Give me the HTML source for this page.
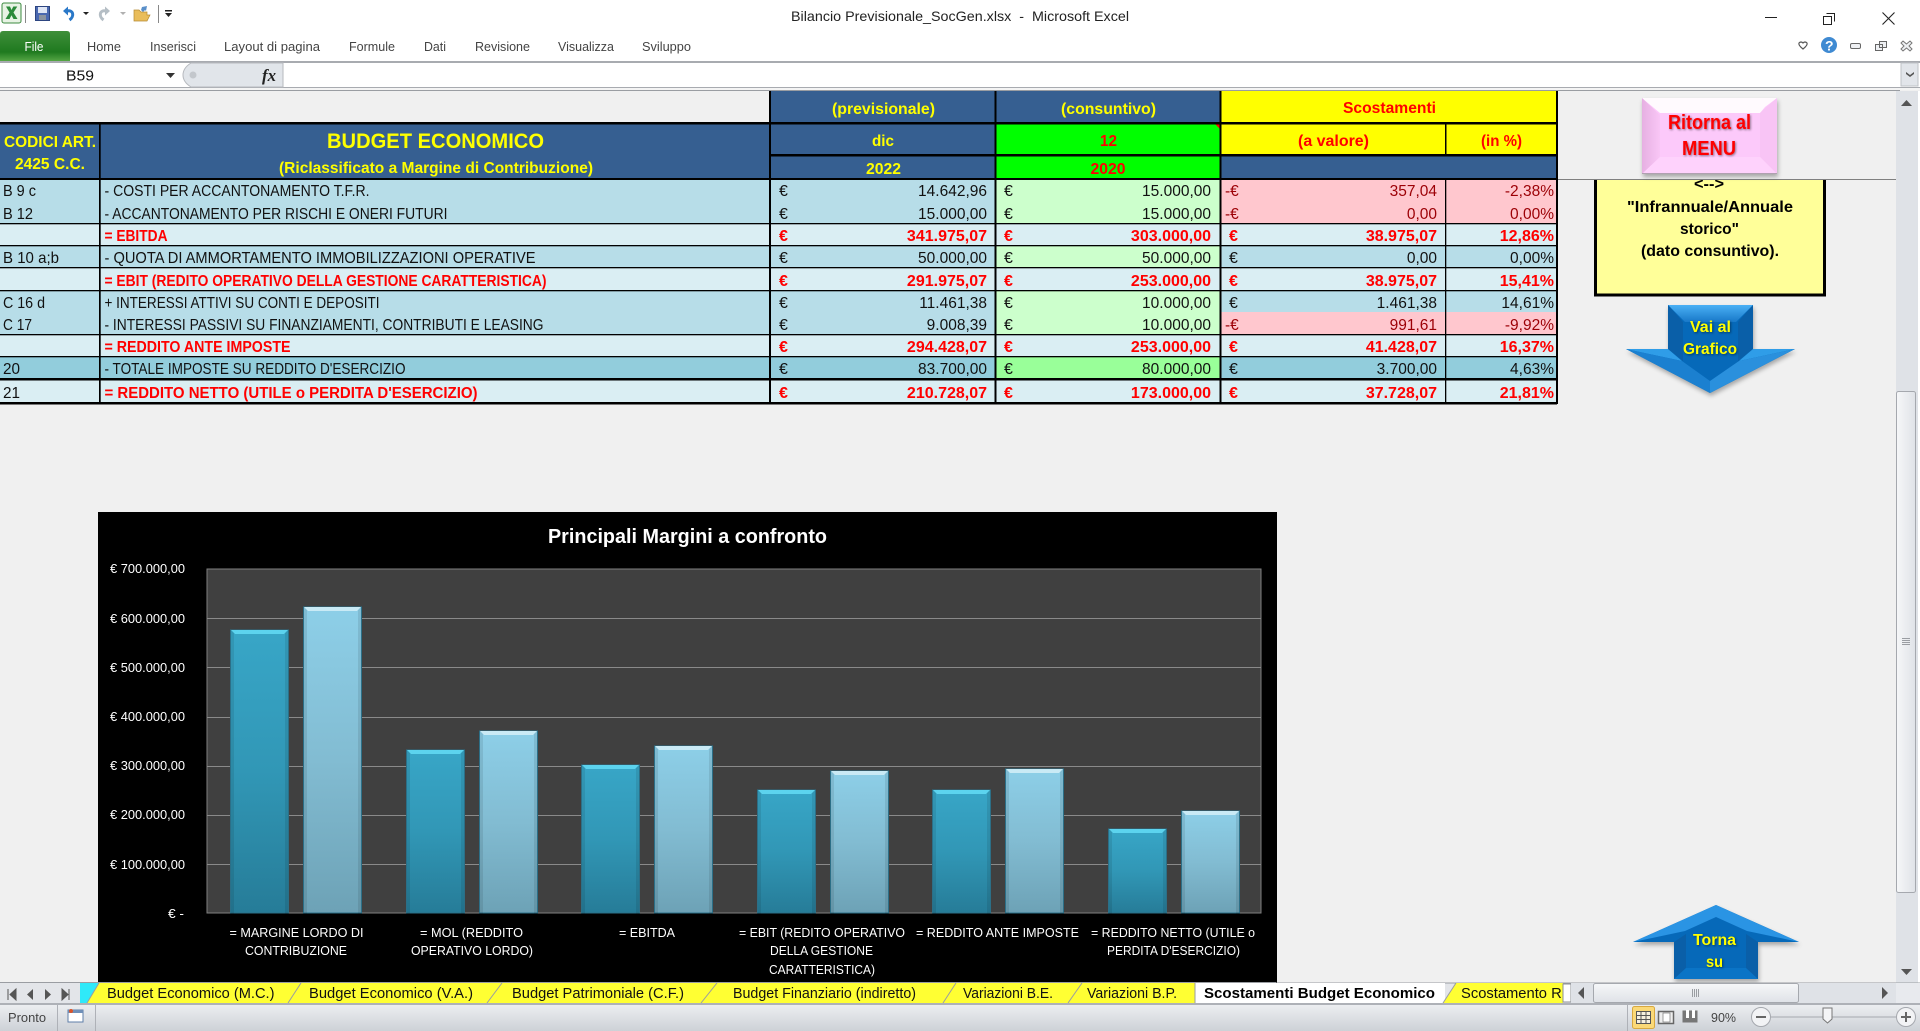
<!DOCTYPE html>
<html lang="it"><head><meta charset="utf-8"><title>Bilancio Previsionale_SocGen.xlsx - Microsoft Excel</title>
<style>
html,body{margin:0;padding:0;background:#f0f0f0;width:1920px;height:1031px;overflow:hidden}
svg{display:block;position:absolute;left:0;top:0}
text{font-family:"Liberation Sans",sans-serif;white-space:pre}
.ui{font-size:13px;fill:#444}
.d{font-size:16px;fill:#111}
.n{font-size:15.5px;fill:#111;text-anchor:end}
.b{font-size:16px;fill:#f00;font-weight:bold}
.bn{font-size:16px;fill:#f00;font-weight:bold;text-anchor:end}
.p{font-size:15.5px;fill:#9c0006}
.pn{font-size:15.5px;fill:#9c0006;text-anchor:end}
.y{font-size:16px;fill:#ff0;font-weight:bold}
.r{font-size:16px;fill:#f00;font-weight:bold}
.c{font-size:13px;fill:#fff}
.t{font-size:14.5px;fill:#111}
.k{font-size:16px;fill:#000;font-weight:bold}
.sh{filter:drop-shadow(1px 1px 1px rgba(0,0,0,.45))}
.sh2{filter:drop-shadow(1px 3px 2px rgba(0,0,0,.3))}
</style></head><body>
<svg width="1920" height="1031" viewBox="0 0 1920 1031" xmlns="http://www.w3.org/2000/svg">
<defs>
<linearGradient id="g1" x1="0" y1="0" x2="0" y2="1"><stop offset="0" stop-color="#38a6c7"/><stop offset=".5" stop-color="#3197b6"/><stop offset="1" stop-color="#267c98"/></linearGradient>
<linearGradient id="g2" x1="0" y1="0" x2="0" y2="1"><stop offset="0" stop-color="#8dcfe8"/><stop offset=".5" stop-color="#82bcd2"/><stop offset="1" stop-color="#6da2b6"/></linearGradient>
<linearGradient id="st" x1="0" y1="0" x2="0" y2="1"><stop offset="0" stop-color="#eceef1"/><stop offset="1" stop-color="#cdd1d7"/></linearGradient>
<linearGradient id="fl" x1="0" y1="0" x2="0" y2="1"><stop offset="0" stop-color="#3f8f3a"/><stop offset=".7" stop-color="#1f7a1f"/><stop offset="1" stop-color="#55a544"/></linearGradient>
<linearGradient id="vt" x1="0" y1="0" x2="1" y2="0"><stop offset="0" stop-color="#f6f7f9"/><stop offset="1" stop-color="#dfe2e7"/></linearGradient>
<linearGradient id="ht" x1="0" y1="0" x2="0" y2="1"><stop offset="0" stop-color="#f6f7f9"/><stop offset="1" stop-color="#dfe2e7"/></linearGradient>
<linearGradient id="ad" x1="0" y1="0" x2="0" y2="1"><stop offset="0" stop-color="#4ab0f5"/><stop offset="1" stop-color="#1878c8"/></linearGradient>
<linearGradient id="lb" x1="0" y1="0" x2="1" y2="0"><stop offset="0" stop-color="#e6b0e2"/><stop offset="1" stop-color="#f9c6f6"/></linearGradient>
<clipPath id="tc"><rect x="0" y="983" width="1563" height="20"/></clipPath>
<clipPath id="ch"><rect x="98" y="512" width="1179" height="471"/></clipPath>
</defs>

<!-- sheet background -->
<rect x="0" y="0" width="1920" height="1031" fill="#f0f0f0"/>

<!-- title bar + ribbon -->
<rect x="0" y="0" width="1920" height="61" fill="#fff"/>
<rect x="2" y="3" width="19" height="20" rx="2" fill="#e8f3e4" stroke="#3d8b40"/>
<path d="M6 6.500h4l1.500 3.500 1.800-3.500h4l-3.800 6 4 6.500h-4l-2-3.800-2 3.800h-4l4-6.500z" fill="#2c8a3a"/>
<rect x="25" y="5" width="1" height="18" fill="#888"/>
<rect x="35.500" y="6.500" width="14" height="14" fill="#4a68b0" stroke="#2d4580"/><rect x="38" y="7" width="9" height="6" fill="#dfe6f5"/><rect x="39" y="15" width="7" height="5" fill="#8a93a0"/>
<path d="M63 11l5-4.500v9z" fill="#2a78c8"/><path d="M67 11c6-1.500 8 5 2.500 9" fill="none" stroke="#2a78c8" stroke-width="3"/>
<path d="M83 12h6l-3 3z" fill="#222"/>
<path d="M110 11l-5-4.500v9z" fill="#b5bec5"/><path d="M106 11c-6-1.500-8 5-2.500 9" fill="none" stroke="#b5bec5" stroke-width="3"/>
<path d="M120 12h6l-3 3z" fill="#b0b0b0"/>
<path d="M134 10h5l2 2h6v3h3l-3 6h-13z" fill="#e9bd5b" stroke="#b58a33" stroke-width=".7"/><path d="M142 7l5-1-1 5-1-1-2 2-2-2z" fill="#5a8fc9"/>
<rect x="158" y="5" width="1" height="18" fill="#888"/>
<rect x="165" y="10" width="7" height="1.500" fill="#222"/><path d="M165 13h7l-3.500 4z" fill="#222"/>
<text x="791" y="21" font-size="14" fill="#222" textLength="338" lengthAdjust="spacingAndGlyphs">Bilancio Previsionale_SocGen.xlsx  -  Microsoft Excel</text>
<rect x="1765" y="17" width="12" height="1" fill="#222"/>
<path d="M1826.500 13.500h8v8M1823.500 16.500h8v8h-8z" fill="none" stroke="#222"/>
<path d="M1882.500 12.500l12 12M1894.500 12.500l-12 12" stroke="#222" fill="none" stroke-width="1.100"/>

<path d="M0 61V34q0-3 3-3h64q3 0 3 3v27z" fill="url(#fl)"/>
<text x="24.500" y="51" font-size="12.500" fill="#fff" textLength="19" lengthAdjust="spacingAndGlyphs">File</text>
<g class="ui">
<text x="87" y="51" textLength="34" lengthAdjust="spacingAndGlyphs">Home</text>
<text x="150" y="51" textLength="46" lengthAdjust="spacingAndGlyphs">Inserisci</text>
<text x="224" y="51" textLength="96" lengthAdjust="spacingAndGlyphs">Layout di pagina</text>
<text x="349" y="51" textLength="46" lengthAdjust="spacingAndGlyphs">Formule</text>
<text x="424" y="51" textLength="22" lengthAdjust="spacingAndGlyphs">Dati</text>
<text x="475" y="51" textLength="55" lengthAdjust="spacingAndGlyphs">Revisione</text>
<text x="558" y="51" textLength="56" lengthAdjust="spacingAndGlyphs">Visualizza</text>
<text x="642" y="51" textLength="49" lengthAdjust="spacingAndGlyphs">Sviluppo</text>
</g>
<path d="M1799 43q2-2 4 0q2-2 4 0q1 2-4 6q-5-4-4-6z" fill="none" stroke="#555" stroke-width="1.200"/>
<circle cx="1829" cy="45" r="8" fill="#3f8ad2"/><text x="1825" y="50.500" font-size="14" font-weight="bold" fill="#fff">?</text>
<rect x="1850.500" y="43.500" width="10" height="5" rx="1.500" fill="#eef0f3" stroke="#666"/>
<path d="M1879.500 41.500h7v6h-7zM1875.500 44.500h7v6h-7z" fill="#eef0f3" stroke="#666"/>
<path d="M1903 41l3.500 3 3.500-3 2 2-3 3 3 3-2 2-3.500-3-3.500 3-2-2 3-3-3-3z" fill="#eef0f3" stroke="#777"/>

<!-- formula bar -->
<rect x="0" y="61" width="1920" height="2" fill="#a8abb0"/>
<rect x="0" y="63" width="1920" height="24" fill="#fff"/>
<rect x="0" y="87" width="1920" height="1" fill="#a8abb0"/>
<rect x="0" y="88" width="1920" height="2" fill="#f4f4f4"/>
<rect x="0" y="90" width="1900" height="1" fill="#9a9da2"/>
<text x="66" y="80.500" font-size="14.500" fill="#111" textLength="28" lengthAdjust="spacingAndGlyphs">B59</text>
<path d="M166 73h9l-4.500 5z" fill="#333"/>
<path d="M283 63h-92q-8 5-8 12t8 12h92z" fill="#e1e5ea" stroke="#b6b9be"/>
<circle cx="193" cy="75" r="3.500" fill="#c3c7cc"/>
<text x="262" y="81" style="font-family:'Liberation Serif',serif" font-size="17" font-style="italic" font-weight="bold" fill="#222" textLength="14" lengthAdjust="spacingAndGlyphs">fx</text>
<rect x="1901" y="63" width="17" height="23" fill="#e2e5ea" stroke="#bfc2c7"/>
<path d="M1906 72l4 3 4-3v2l-4 3-4-3z" fill="#555"/>

<!-- header blocks -->
<rect x="0" y="124" width="769" height="54" fill="#365f91"/>
<rect x="770" y="91" width="450" height="31" fill="#365f91"/>
<rect x="1220" y="91" width="337" height="31" fill="#ff0"/>
<rect x="770" y="124" width="225" height="30" fill="#365f91"/>
<rect x="770" y="156" width="225" height="22" fill="#365f91"/>
<rect x="995" y="124" width="225" height="30" fill="#0f0"/>
<rect x="995" y="156" width="225" height="22" fill="#0f0"/>
<rect x="1220" y="124" width="337" height="30" fill="#ff0"/>
<rect x="1220" y="156" width="337" height="22" fill="#365f91"/>
<path d="M1215 124h5v5z" fill="#f00"/>

<!-- row fills -->
<rect x="0" y="180" width="995" height="43" fill="#b7dde8"/><rect x="995" y="180" width="225" height="43" fill="#ccffcc"/><rect x="1220" y="180" width="337" height="43" fill="#ffc7ce"/>
<rect x="0" y="223" width="1557" height="22" fill="#daeef3"/>
<rect x="0" y="245" width="1557" height="22" fill="#b7dde8"/><rect x="995" y="245" width="225" height="22" fill="#ccffcc"/>
<rect x="0" y="267" width="1557" height="23" fill="#daeef3"/>
<rect x="0" y="290" width="1557" height="44" fill="#b7dde8"/><rect x="995" y="290" width="225" height="44" fill="#ccffcc"/><rect x="1220" y="312" width="337" height="22" fill="#ffc7ce"/>
<rect x="0" y="334" width="1557" height="22" fill="#daeef3"/>
<rect x="0" y="356" width="1557" height="23" fill="#92cddc"/><rect x="995" y="356" width="225" height="23" fill="#99ff99"/>
<rect x="0" y="379" width="1557" height="24" fill="#daeef3"/>

<!-- grid lines -->
<g fill="#000">
<rect x="0" y="122" width="1557" height="2.500"/>
<rect x="769" y="154" width="788" height="2.500"/>
<rect x="0" y="178" width="1557" height="2"/>
<rect x="0" y="223" width="1557" height="1.300"/>
<rect x="0" y="245" width="1557" height="1.300"/>
<rect x="0" y="267" width="1557" height="1.300"/>
<rect x="0" y="290" width="1557" height="1.300"/>
<rect x="0" y="334" width="1557" height="1.300"/>
<rect x="0" y="356" width="1557" height="1.300"/>
<rect x="0" y="378" width="1557" height="2.500"/>
<rect x="0" y="402" width="1557" height="2.500"/>
<rect x="99" y="124" width="1.700" height="280"/>
<rect x="769" y="91" width="2" height="313"/>
<rect x="994.500" y="91" width="2" height="313"/>
<rect x="1219.500" y="91" width="2" height="313"/>
<rect x="1445" y="124" width="1.500" height="32"/>
<rect x="1445" y="180" width="1.300" height="224"/>
<rect x="1556" y="91" width="2" height="313"/>
</g>
<rect x="1558" y="179" width="338" height="1" fill="#808080"/>

<!-- header text -->
<text class="y" x="4" y="147" textLength="92" lengthAdjust="spacingAndGlyphs">CODICI ART.</text>
<text class="y" x="15" y="169" textLength="70" lengthAdjust="spacingAndGlyphs">2425 C.C.</text>
<text class="y" x="327" y="148" style="font-size:21px" textLength="217" lengthAdjust="spacingAndGlyphs">BUDGET ECONOMICO</text>
<text class="y" x="279" y="173" textLength="314" lengthAdjust="spacingAndGlyphs">(Riclassificato a Margine di Contribuzione)</text>
<text class="y" x="832" y="114" textLength="103" lengthAdjust="spacingAndGlyphs">(previsionale)</text>
<text class="y" x="1061" y="114" textLength="95" lengthAdjust="spacingAndGlyphs">(consuntivo)</text>
<text class="r" x="1343" y="113" textLength="93" lengthAdjust="spacingAndGlyphs">Scostamenti</text>
<text class="y" x="872" y="146" textLength="22" lengthAdjust="spacingAndGlyphs">dic</text>
<text class="r" x="1100" y="146" textLength="17" lengthAdjust="spacingAndGlyphs">12</text>
<text class="r" x="1298" y="146" textLength="71" lengthAdjust="spacingAndGlyphs">(a valore)</text>
<text class="r" x="1481" y="146" textLength="41" lengthAdjust="spacingAndGlyphs">(in %)</text>
<text class="y" x="866" y="174" textLength="35" lengthAdjust="spacingAndGlyphs">2022</text>
<text class="r" x="1090.500" y="174" textLength="35" lengthAdjust="spacingAndGlyphs">2020</text>

<!-- codes -->
<text class="d" x="3" y="196" textLength="33" lengthAdjust="spacingAndGlyphs">B 9 c</text>
<text class="d" x="3" y="219" textLength="30" lengthAdjust="spacingAndGlyphs">B 12</text>
<text class="d" x="3" y="263" textLength="56" lengthAdjust="spacingAndGlyphs">B 10 a;b</text>
<text class="d" x="3" y="308" textLength="42" lengthAdjust="spacingAndGlyphs">C 16 d</text>
<text class="d" x="3" y="330" textLength="29" lengthAdjust="spacingAndGlyphs">C 17</text>
<text class="d" x="3" y="374" textLength="17" lengthAdjust="spacingAndGlyphs">20</text>
<text class="d" x="3" y="398" textLength="17" lengthAdjust="spacingAndGlyphs">21</text>

<!-- labels -->
<text class="d" x="104.500" y="196" textLength="265" lengthAdjust="spacingAndGlyphs">- COSTI PER ACCANTONAMENTO T.F.R.</text>
<text class="d" x="104.500" y="219" textLength="343" lengthAdjust="spacingAndGlyphs">- ACCANTONAMENTO PER RISCHI E ONERI FUTURI</text>
<text class="b" x="104.500" y="241" textLength="63" lengthAdjust="spacingAndGlyphs">= EBITDA</text>
<text class="d" x="104.500" y="263" textLength="431" lengthAdjust="spacingAndGlyphs">- QUOTA DI AMMORTAMENTO IMMOBILIZZAZIONI OPERATIVE</text>
<text class="b" x="104.500" y="286" textLength="442" lengthAdjust="spacingAndGlyphs">= EBIT (REDITO OPERATIVO DELLA GESTIONE CARATTERISTICA)</text>
<text class="d" x="104.500" y="308" textLength="275" lengthAdjust="spacingAndGlyphs">+ INTERESSI ATTIVI SU CONTI E DEPOSITI</text>
<text class="d" x="104.500" y="330" textLength="439" lengthAdjust="spacingAndGlyphs">- INTERESSI PASSIVI SU FINANZIAMENTI, CONTRIBUTI E LEASING</text>
<text class="b" x="104.500" y="352" textLength="186" lengthAdjust="spacingAndGlyphs">= REDDITO ANTE IMPOSTE</text>
<text class="d" x="104.500" y="374" textLength="301" lengthAdjust="spacingAndGlyphs">- TOTALE IMPOSTE SU REDDITO D'ESERCIZIO</text>
<text class="b" x="104.500" y="398" textLength="373" lengthAdjust="spacingAndGlyphs">= REDDITO NETTO (UTILE o PERDITA D'ESERCIZIO)</text>

<!-- euro signs and values -->
<g>
<text class="d" x="779" y="196">€</text><text class="n" x="987" y="196">14.642,96</text><text class="d" x="1004" y="196">€</text><text class="n" x="1211" y="196">15.000,00</text><text class="p" x="1225" y="196">-€</text><text class="pn" x="1437" y="196">357,04</text><text class="pn" x="1554" y="196">-2,38%</text>
<text class="d" x="779" y="219">€</text><text class="n" x="987" y="219">15.000,00</text><text class="d" x="1004" y="219">€</text><text class="n" x="1211" y="219">15.000,00</text><text class="p" x="1225" y="219">-€</text><text class="pn" x="1437" y="219">0,00</text><text class="pn" x="1554" y="219">0,00%</text>
<text class="b" x="779" y="241">€</text><text class="bn" x="987" y="241">341.975,07</text><text class="b" x="1004" y="241">€</text><text class="bn" x="1211" y="241">303.000,00</text><text class="b" x="1229" y="241">€</text><text class="bn" x="1437" y="241">38.975,07</text><text class="bn" x="1554" y="241">12,86%</text>
<text class="d" x="779" y="263">€</text><text class="n" x="987" y="263">50.000,00</text><text class="d" x="1004" y="263">€</text><text class="n" x="1211" y="263">50.000,00</text><text class="d" x="1229" y="263">€</text><text class="n" x="1437" y="263">0,00</text><text class="n" x="1554" y="263">0,00%</text>
<text class="b" x="779" y="286">€</text><text class="bn" x="987" y="286">291.975,07</text><text class="b" x="1004" y="286">€</text><text class="bn" x="1211" y="286">253.000,00</text><text class="b" x="1229" y="286">€</text><text class="bn" x="1437" y="286">38.975,07</text><text class="bn" x="1554" y="286">15,41%</text>
<text class="d" x="779" y="308">€</text><text class="n" x="987" y="308">11.461,38</text><text class="d" x="1004" y="308">€</text><text class="n" x="1211" y="308">10.000,00</text><text class="d" x="1229" y="308">€</text><text class="n" x="1437" y="308">1.461,38</text><text class="n" x="1554" y="308">14,61%</text>
<text class="d" x="779" y="330">€</text><text class="n" x="987" y="330">9.008,39</text><text class="d" x="1004" y="330">€</text><text class="n" x="1211" y="330">10.000,00</text><text class="p" x="1225" y="330">-€</text><text class="pn" x="1437" y="330">991,61</text><text class="pn" x="1554" y="330">-9,92%</text>
<text class="b" x="779" y="352">€</text><text class="bn" x="987" y="352">294.428,07</text><text class="b" x="1004" y="352">€</text><text class="bn" x="1211" y="352">253.000,00</text><text class="b" x="1229" y="352">€</text><text class="bn" x="1437" y="352">41.428,07</text><text class="bn" x="1554" y="352">16,37%</text>
<text class="d" x="779" y="374">€</text><text class="n" x="987" y="374">83.700,00</text><text class="d" x="1004" y="374">€</text><text class="n" x="1211" y="374">80.000,00</text><text class="d" x="1229" y="374">€</text><text class="n" x="1437" y="374">3.700,00</text><text class="n" x="1554" y="374">4,63%</text>
<text class="b" x="779" y="398">€</text><text class="bn" x="987" y="398">210.728,07</text><text class="b" x="1004" y="398">€</text><text class="bn" x="1211" y="398">173.000,00</text><text class="b" x="1229" y="398">€</text><text class="bn" x="1437" y="398">37.728,07</text><text class="bn" x="1554" y="398">21,81%</text>
</g>

<!-- yellow note -->
<rect x="1595.500" y="170" width="229" height="125" fill="#ffff99" stroke="#000" stroke-width="3"/>
<text class="k" x="1694" y="189" textLength="30" lengthAdjust="spacingAndGlyphs">&lt;--&gt;</text>
<text class="k" x="1627" y="212" textLength="166" lengthAdjust="spacingAndGlyphs">"Infrannuale/Annuale</text>
<text class="k" x="1680" y="234" textLength="59" lengthAdjust="spacingAndGlyphs">storico"</text>
<text class="k" x="1641" y="256" textLength="138" lengthAdjust="spacingAndGlyphs">(dato consuntivo).</text>
<rect x="1558" y="91" width="338" height="88" fill="#f0f0f0"/>
<rect x="1558" y="179" width="338" height="1" fill="#808080"/>

<!-- Ritorna button -->
<g class="sh2"><rect x="1642" y="98" width="135" height="76" fill="#fcc9fa"/></g>
<path d="M1642 98h135l-12 9-5 6h-100l-6-5z" fill="#fffafe"/>
<path d="M1642 98l18 17v42l-18 17z" fill="url(#lb)"/>
<path d="M1777 98l-17 15v44l17 17z" fill="#f8c4f5"/>
<path d="M1642 174l18-17h100l17 17z" fill="#fed2fc"/>
<rect x="1642" y="173" width="135" height="1" fill="#b0a0b0"/>
<text class="sh" x="1668" y="129" font-size="20" font-weight="bold" fill="#f00" textLength="83" lengthAdjust="spacingAndGlyphs">Ritorna al</text>
<text class="sh" x="1682" y="155" font-size="20" font-weight="bold" fill="#f00" textLength="54" lengthAdjust="spacingAndGlyphs">MENU</text>

<!-- down arrow -->
<g class="sh2"><path d="M1668 305h85v44h42l-85 44-84-44h42z" fill="#0669b9"/></g>
<path d="M1668 305h85l-17 17h-51z" fill="url(#ad)"/>
<path d="M1668 305l15 17v39l-15-12z" fill="#0a5fa8"/>
<path d="M1753 305l-15 17v39l15-12z" fill="#0a5fa8"/>
<path d="M1626 349h42l14 12z" fill="#2f9de8"/><path d="M1795 349h-42l-14 12z" fill="#2f9de8"/>
<path d="M1626 349l84 44v-12l-28-20z" fill="#1b80d0"/><path d="M1795 349l-85 44v-12l29-20z" fill="#2a90dd"/>
<text class="sh" x="1690" y="332" font-size="15.500" font-weight="bold" fill="#ff0" textLength="41" lengthAdjust="spacingAndGlyphs">Vai al</text>
<text class="sh" x="1683" y="354" font-size="15.500" font-weight="bold" fill="#ff0" textLength="54" lengthAdjust="spacingAndGlyphs">Grafico</text>

<!-- chart -->
<g clip-path="url(#ch)">
<rect x="98" y="512" width="1179" height="471" fill="#000"/>
<rect x="207" y="569" width="1054" height="344" fill="#404040" stroke="#808080"/>
<g fill="#8a8a8a">
<rect x="207" y="618" width="1054" height="1"/><rect x="207" y="667" width="1054" height="1"/><rect x="207" y="717" width="1054" height="1"/><rect x="207" y="766" width="1054" height="1"/><rect x="207" y="815" width="1054" height="1"/><rect x="207" y="864" width="1054" height="1"/>
</g>
<!-- bars -->
<g stroke="#2c6f87" stroke-width="1">
<rect x="230.500" y="630" width="58" height="283" fill="url(#g1)"/><rect x="303.500" y="607" width="58" height="306" fill="url(#g2)"/>
<rect x="406.500" y="750" width="58" height="163" fill="url(#g1)"/><rect x="479.500" y="731" width="58" height="182" fill="url(#g2)"/>
<rect x="581.500" y="765" width="58" height="148" fill="url(#g1)"/><rect x="654.500" y="746" width="58" height="167" fill="url(#g2)"/>
<rect x="757.500" y="790" width="58" height="123" fill="url(#g1)"/><rect x="830.500" y="771" width="58" height="142" fill="url(#g2)"/>
<rect x="932.500" y="790" width="58" height="123" fill="url(#g1)"/><rect x="1005.500" y="769" width="58" height="144" fill="url(#g2)"/>
<rect x="1108.500" y="829" width="58" height="84" fill="url(#g1)"/><rect x="1181.500" y="811" width="58" height="102" fill="url(#g2)"/>
</g>
<g fill="none" stroke="#000" stroke-opacity=".09" stroke-width="3">
<rect x="232.500" y="632" width="54" height="283"/><rect x="305.500" y="609" width="54" height="306"/>
<rect x="408.500" y="752" width="54" height="163"/><rect x="481.500" y="733" width="54" height="182"/>
<rect x="583.500" y="767" width="54" height="148"/><rect x="656.500" y="748" width="54" height="167"/>
<rect x="759.500" y="792" width="54" height="123"/><rect x="832.500" y="773" width="54" height="142"/>
<rect x="934.500" y="792" width="54" height="123"/><rect x="1007.500" y="771" width="54" height="144"/>
<rect x="1110.500" y="831" width="54" height="84"/><rect x="1183.500" y="813" width="54" height="102"/>
</g>
<g fill="#5cd3ee">
<path d="M231 630h57l-4 4h-49z"/><path d="M407 750h57l-4 4h-49z"/><path d="M582 765h57l-4 4h-49z"/><path d="M758 790h57l-4 4h-49z"/><path d="M933 790h57l-4 4h-49z"/><path d="M1109 829h57l-4 4h-49z"/>
</g>
<g fill="#c9eaf5">
<path d="M304 607h57l-4 4h-49z"/><path d="M480 731h57l-4 4h-49z"/><path d="M655 746h57l-4 4h-49z"/><path d="M831 771h57l-4 4h-49z"/><path d="M1006 769h57l-4 4h-49z"/><path d="M1182 811h57l-4 4h-49z"/>
</g>
<text x="548" y="543" font-size="20" font-weight="bold" fill="#fff" textLength="279" lengthAdjust="spacingAndGlyphs">Principali Margini a confronto</text>
<g class="c">
<text x="110" y="573" textLength="75" lengthAdjust="spacingAndGlyphs">€ 700.000,00</text>
<text x="110" y="623" textLength="75" lengthAdjust="spacingAndGlyphs">€ 600.000,00</text>
<text x="110" y="672" textLength="75" lengthAdjust="spacingAndGlyphs">€ 500.000,00</text>
<text x="110" y="721" textLength="75" lengthAdjust="spacingAndGlyphs">€ 400.000,00</text>
<text x="110" y="770" textLength="75" lengthAdjust="spacingAndGlyphs">€ 300.000,00</text>
<text x="110" y="819" textLength="75" lengthAdjust="spacingAndGlyphs">€ 200.000,00</text>
<text x="110" y="869" textLength="75" lengthAdjust="spacingAndGlyphs">€ 100.000,00</text>
<text x="168" y="918" textLength="16" lengthAdjust="spacingAndGlyphs">€ -</text>
<text x="229.500" y="937" textLength="134" lengthAdjust="spacingAndGlyphs">= MARGINE LORDO DI</text>
<text x="245" y="955" textLength="102" lengthAdjust="spacingAndGlyphs">CONTRIBUZIONE</text>
<text x="420" y="937" textLength="103" lengthAdjust="spacingAndGlyphs">= MOL (REDDITO</text>
<text x="411" y="955" textLength="122" lengthAdjust="spacingAndGlyphs">OPERATIVO LORDO)</text>
<text x="619" y="937" textLength="56" lengthAdjust="spacingAndGlyphs">= EBITDA</text>
<text x="739" y="937" textLength="166" lengthAdjust="spacingAndGlyphs">= EBIT (REDITO OPERATIVO</text>
<text x="770" y="955" textLength="103" lengthAdjust="spacingAndGlyphs">DELLA GESTIONE</text>
<text x="769" y="974" textLength="106" lengthAdjust="spacingAndGlyphs">CARATTERISTICA)</text>
<text x="916" y="937" textLength="163" lengthAdjust="spacingAndGlyphs">= REDDITO ANTE IMPOSTE</text>
<text x="1091" y="937" textLength="164" lengthAdjust="spacingAndGlyphs">= REDDITO NETTO (UTILE o</text>
<text x="1107" y="955" textLength="133" lengthAdjust="spacingAndGlyphs">PERDITA D'ESERCIZIO)</text>
</g>
</g>

<!-- up arrow -->
<g class="sh2"><path d="M1716 905l83 37h-41v37h-84v-37h-41z" fill="#0669b9"/></g>
<path d="M1716 905l83 37-52-11-31-14-31 14-52 11z" fill="#2a94e4"/>
<path d="M1674 942l12-8v34l-12 11z" fill="#0a5fa8"/><path d="M1758 942l-12-8v34l12 11z" fill="#0a5fa8"/>
<path d="M1674 979l12-11h60l12 11z" fill="#0a74c6"/>
<text class="sh" x="1693" y="945" font-size="15.500" font-weight="bold" fill="#ff0" textLength="43" lengthAdjust="spacingAndGlyphs">Torna</text>
<text class="sh" x="1706" y="967" font-size="15.500" font-weight="bold" fill="#ff0" textLength="17" lengthAdjust="spacingAndGlyphs">su</text>

<!-- vertical scrollbar -->
<rect x="1896" y="91" width="22" height="892" fill="#dfe2e7"/>
<rect x="1918" y="91" width="2" height="940" fill="#fff"/>
<path d="M1901 106l5.500-6 5.500 6z" fill="#555"/>
<rect x="1896.500" y="391.500" width="19" height="501" rx="2" fill="url(#vt)" stroke="#a5a8ae"/>
<g fill="#9a9da2"><rect x="1902" y="638" width="8" height="1"/><rect x="1902" y="640" width="8" height="1"/><rect x="1902" y="642" width="8" height="1"/><rect x="1902" y="644" width="8" height="1"/></g>
<path d="M1901 969l5.500 6 5.500-6z" fill="#555"/>

<!-- tabs strip -->
<rect x="0" y="983" width="1920" height="20" fill="#e3e5e9"/>
<rect x="0" y="982" width="98" height="1" fill="#9a9da2"/><rect x="1276" y="982.500" width="644" height="1" fill="#9a9da2"/>
<rect x="98" y="982" width="1178" height="1" fill="#9a9da2"/>
<path d="M8 989v11M16 989l-6 5.500 6 5.500z" fill="#555" stroke="#555"/>
<path d="M33 989l-6 5.500 6 5.500z" fill="#555"/>
<path d="M45 989l6 5.500-6 5.500z" fill="#555"/>
<path d="M62 989l6 5.500-6 5.500zM69 989v11" fill="#555" stroke="#555"/>
<path d="M80 983h19l-12 20h-7z" fill="#2fe9f9"/>
<g clip-path="url(#tc)">
<path d="M87 1003l12-20h490v20z" fill="#ffff33"/>
<path d="M288 1003l13-20h400v20z" fill="#ffff33"/>
<path d="M487 1003l15-20h700v20z" fill="#ffff33"/>
<rect x="1195" y="983" width="250" height="20" fill="#fff"/>
<path d="M1443 1003l13-20h120v20z" fill="#ffff33"/>
<g stroke="#9a9da2" stroke-width="1" fill="none">
<path d="M87 1003l12-20M288 1003l13-20M487 1003l15-20M701 1003l16-20M943 1003l13-20M1068 1003l14-20M1195 1003l0-20M1443 1003l13-20"/>
</g>
<g class="t">
<text x="107" y="998" textLength="167.500" lengthAdjust="spacingAndGlyphs">Budget Economico (M.C.)</text>
<text x="309" y="998" textLength="164" lengthAdjust="spacingAndGlyphs">Budget Economico (V.A.)</text>
<text x="512" y="998" textLength="172" lengthAdjust="spacingAndGlyphs">Budget Patrimoniale (C.F.)</text>
<text x="733" y="998" textLength="183" lengthAdjust="spacingAndGlyphs">Budget Finanziario (indiretto)</text>
<text x="963" y="998" textLength="90" lengthAdjust="spacingAndGlyphs">Variazioni B.E.</text>
<text x="1087" y="998" textLength="90" lengthAdjust="spacingAndGlyphs">Variazioni B.P.</text>
<text x="1204" y="998" font-weight="bold" fill="#000" textLength="231" lengthAdjust="spacingAndGlyphs">Scostamenti Budget Economico</text>
<text x="1461" y="998" textLength="104" lengthAdjust="spacingAndGlyphs">Scostamento Ri</text>
</g>
</g>
<rect x="1563" y="984" width="8" height="18" fill="#fff" stroke="#8d9096"/>

<!-- horizontal scrollbar -->
<rect x="1571" y="983" width="325" height="20" fill="#dfe2e7"/>
<rect x="1896" y="983" width="24" height="20" fill="#e8eaee"/>
<path d="M1584 987l-6 6 6 6z" fill="#555"/>
<rect x="1593.500" y="983.500" width="205" height="19" rx="2" fill="url(#ht)" stroke="#a5a8ae"/>
<g fill="#9a9da2"><rect x="1692" y="989" width="1" height="8"/><rect x="1694" y="989" width="1" height="8"/><rect x="1696" y="989" width="1" height="8"/><rect x="1698" y="989" width="1" height="8"/></g>
<path d="M1882 987l6 6-6 6z" fill="#555"/>

<!-- status bar -->
<rect x="0" y="1003" width="1920" height="2" fill="#aeb1b7"/>
<rect x="0" y="1005" width="1920" height="26" fill="url(#st)"/>
<text x="8" y="1022" font-size="13" fill="#444" textLength="38" lengthAdjust="spacingAndGlyphs">Pronto</text>
<rect x="57" y="1005" width="1" height="26" fill="#aeb1b7"/>
<rect x="95" y="1005" width="1" height="26" fill="#aeb1b7"/>
<rect x="68" y="1010" width="15" height="12" fill="#fff" stroke="#5f7fa8"/><rect x="68" y="1010" width="15" height="3" fill="#6f8fb8"/><circle cx="71" cy="1011" r="2" fill="#d9542b"/>
<rect x="1627" y="1005" width="1" height="26" fill="#aeb1b7"/>
<rect x="1632.500" y="1006.500" width="22" height="22" rx="2" fill="#fbd977" stroke="#d8a83f"/>
<rect x="1636.500" y="1011.500" width="14" height="12" fill="#f5f0e0" stroke="#555"/><path d="M1641 1011v12M1646 1011v12M1636 1015.500h14M1636 1019.500h14" stroke="#555"/>
<rect x="1658.500" y="1011.500" width="15" height="12" fill="#eee" stroke="#666" stroke-width="1.500"/><rect x="1663" y="1013" width="7" height="9" fill="#fff" stroke="#777" stroke-width=".7"/>
<rect x="1682.500" y="1010.500" width="15" height="12" fill="#777"/><rect x="1686" y="1010" width="3" height="8" fill="#fff"/><rect x="1692" y="1010" width="3" height="8" fill="#fff"/>
<text x="1711" y="1022" font-size="13" fill="#444" textLength="25" lengthAdjust="spacingAndGlyphs">90%</text>
<circle cx="1761" cy="1017" r="9.500" fill="#f2f3f5" stroke="#a5a8ae"/><rect x="1756" y="1016" width="10" height="2" fill="#666"/>
<rect x="1771" y="1016.500" width="125" height="1" fill="#a5a8ae"/>
<path d="M1823 1008h9v11l-4.500 4-4.500-4z" fill="#f4f5f7" stroke="#777"/>
<circle cx="1906" cy="1017" r="9.500" fill="#f2f3f5" stroke="#a5a8ae"/><rect x="1901" y="1016" width="10" height="2" fill="#666"/><rect x="1905" y="1012" width="2" height="10" fill="#666"/>
</svg>
</body></html>
